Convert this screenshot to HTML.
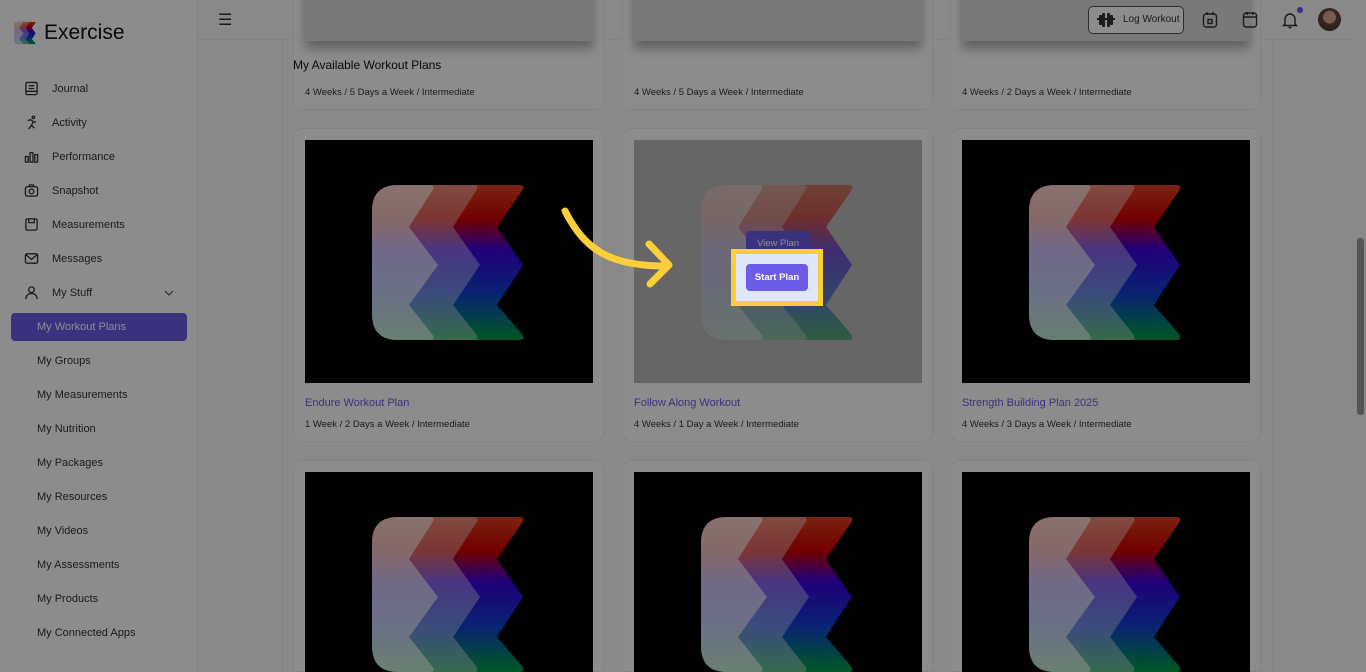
<!DOCTYPE html>
<html style="width:1366px;height:672px;overflow:hidden"><head><meta charset="utf-8"><style>
*{margin:0;padding:0;box-sizing:border-box}
body{width:1366px;height:672px;overflow:hidden;background:#fafafa;font-family:"Liberation Sans",sans-serif;position:relative;color:#222}
.side{position:absolute;left:0;top:0;width:198px;height:672px;background:#fff;border-right:1px solid #eee}
.logo{position:absolute;left:14px;top:21px;display:flex;align-items:center;gap:8px;font-size:21px;color:#111}
.nav{position:absolute;left:24px;font-size:11px;color:#333;display:flex;align-items:center;gap:13px}
.nav svg{width:15px;height:15px}
.sub{position:absolute;left:37px;font-size:11px;color:#333}
.active{position:absolute;left:11px;top:313px;width:176px;height:28px;background:#6c5ce7;border-radius:4px;color:#fff;font-size:11px;padding:8px 26px}
.card{position:absolute;width:311px;background:#fff;border:1px solid #eee;border-radius:10px}
.img{position:absolute;left:11px;width:288px;height:243px;background:#000;overflow:hidden}
.img svg{position:absolute;left:67px;top:45px}
.t{position:absolute;left:11px;font-size:11px;color:#6c5ce7}
.m{position:absolute;left:11px;font-size:9.5px;color:#333}
.ov{position:absolute;left:0;top:0;width:1366px;height:672px;background:rgba(0,0,0,0.45)}
</style></head><body>
<svg width="0" height="0" style="position:absolute"><defs>
<linearGradient id="g" x1="0" y1="0" x2="0" y2="1"><stop offset="0" stop-color="#e04020"/><stop offset=".22" stop-color="#d00000"/><stop offset=".42" stop-color="#3a00e0"/><stop offset=".7" stop-color="#1040d0"/><stop offset="1" stop-color="#00a040"/></linearGradient>
<symbol id="lg" viewBox="0 0 154 155">
<path d="M0 26Q0 0 26 0H147Q154 0 150 6L125 42L151 80L125 120L150 149Q154 155 147 155H26Q0 155 0 129Z" fill="url(#g)"/>
<path d="M0 26Q0 0 26 0H102Q108 0 104 6L81 42L108 80L81 120L104 149Q108 155 102 155H26Q0 155 0 129Z" fill="#fff" opacity=".38"/>
<path d="M0 26Q0 0 26 0H58Q64 0 60 6L37 42L66 80L37 120L60 149Q64 155 58 155H26Q0 155 0 129Z" fill="#fff" opacity=".6"/>
</symbol>
</defs></svg>
<div class="side">
<div class="logo"><svg width="22" height="24"><use href="#lg"/></svg>Exercise</div>
<div class="nav" style="top:81px"><svg viewBox="0 0 16 16" fill="none" stroke="#333" stroke-width="1.4"><rect x="2" y="1.5" width="12" height="13" rx="1.5"/><path d="M5 5h6M5 8h6M2 11h12"/></svg>Journal</div>
<div class="nav" style="top:115px"><svg viewBox="0 0 16 16" fill="none" stroke="#333" stroke-width="1.4"><circle cx="10" cy="2.5" r="1.3"/><path d="M4 6l3-1 3 2-2 4 3 3M8 11l-3 4M10 7l3 1"/></svg>Activity</div>
<div class="nav" style="top:149px"><svg viewBox="0 0 16 16" fill="none" stroke="#333" stroke-width="1.4"><rect x="1.5" y="8" width="3" height="6"/><rect x="6.5" y="4" width="3" height="10"/><rect x="11.5" y="6" width="3" height="8"/></svg>Performance</div>
<div class="nav" style="top:183px"><svg viewBox="0 0 16 16" fill="none" stroke="#333" stroke-width="1.4"><rect x="1.5" y="4" width="13" height="10" rx="2"/><circle cx="8" cy="9" r="2.5"/><path d="M5 4l1-2h4l1 2"/></svg>Snapshot</div>
<div class="nav" style="top:217px"><svg viewBox="0 0 16 16" fill="none" stroke="#333" stroke-width="1.4"><rect x="2" y="2" width="12" height="12" rx="1.5"/><path d="M5 2v4h6V2"/></svg>Measurements</div>
<div class="nav" style="top:251px"><svg viewBox="0 0 16 16" fill="none" stroke="#333" stroke-width="1.4"><rect x="1.5" y="3" width="13" height="10" rx="1.5"/><path d="M2 4l6 5 6-5"/></svg>Messages</div>
<div class="nav" style="top:285px"><svg viewBox="0 0 16 16" fill="none" stroke="#333" stroke-width="1.4"><circle cx="8" cy="5" r="3"/><path d="M2 15c0-4 3-6 6-6s6 2 6 6"/></svg>My Stuff</div>
<svg style="position:absolute;left:164px;top:289px" width="10" height="8" fill="none" stroke="#555" stroke-width="1.2"><path d="M1 2l4 4 4-4"/></svg>
<div class="active">My Workout Plans</div>
<div class="sub" style="top:355px">My Groups</div>
<div class="sub" style="top:389px">My Measurements</div>
<div class="sub" style="top:423px">My Nutrition</div>
<div class="sub" style="top:457px">My Packages</div>
<div class="sub" style="top:491px">My Resources</div>
<div class="sub" style="top:525px">My Videos</div>
<div class="sub" style="top:559px">My Assessments</div>
<div class="sub" style="top:593px">My Products</div>
<div class="sub" style="top:627px">My Connected Apps</div>
</div>
<div style="position:absolute;left:218px;top:10px;font-size:16px;color:#333">&#9776;</div>
<div style="position:absolute;left:282px;top:40px;height:632px;border-left:1px solid #eee"></div>
<div style="position:absolute;left:1272px;top:40px;height:632px;border-left:1px solid #eee"></div>
<div style="position:absolute;left:198px;top:39px;width:1158px;border-top:1px solid #eee"></div>

<div class="card" style="left:293px;top:-20px;height:130px"><div class="img" style="top:0;height:60px;background:#ddd;box-shadow:0 8px 10px rgba(0,0,0,.3)"></div><div class="m" style="top:106px">4 Weeks / 5 Days a Week / Intermediate</div></div>
<div class="card" style="left:622px;top:-20px;height:130px"><div class="img" style="top:0;height:60px;background:#ddd;box-shadow:0 8px 10px rgba(0,0,0,.3)"></div><div class="m" style="top:106px">4 Weeks / 5 Days a Week / Intermediate</div></div>
<div class="card" style="left:950px;top:-20px;height:130px"><div class="img" style="top:0;height:60px;background:#ddd;box-shadow:0 8px 10px rgba(0,0,0,.3)"></div><div class="m" style="top:106px">4 Weeks / 2 Days a Week / Intermediate</div></div>
<div style="position:absolute;left:293px;top:58px;font-size:12px;color:#111">My Available Workout Plans</div>

<div class="card" style="left:293px;top:128px;height:314px"><div class="img" style="top:11px"><svg width="154" height="155"><use href="#lg"/></svg></div><div class="t" style="top:268px">Endure Workout Plan</div><div class="m" style="top:290px">1 Week / 2 Days a Week / Intermediate</div></div>
<div class="card" style="left:622px;top:128px;height:314px"><div class="img" style="top:11px;background:#bbb"><svg width="154" height="155" opacity=".55"><use href="#lg"/></svg><div style="position:absolute;left:112px;top:91px;width:64px;height:26px;background:#6c5ce7;border-radius:4px;color:#fff;font-size:9.5px;text-align:center;line-height:26px">View Plan</div></div><div class="t" style="top:268px">Follow Along Workout</div><div class="m" style="top:290px">4 Weeks / 1 Day a Week / Intermediate</div></div>
<div class="card" style="left:950px;top:128px;height:314px"><div class="img" style="top:11px"><svg width="154" height="155"><use href="#lg"/></svg></div><div class="t" style="top:268px">Strength Building Plan 2025</div><div class="m" style="top:290px">4 Weeks / 3 Days a Week / Intermediate</div></div>

<div class="card" style="left:293px;top:460px;height:212px;border-radius:10px 10px 0 0"><div class="img" style="top:11px;height:201px"><svg width="154" height="155"><use href="#lg"/></svg></div></div>
<div class="card" style="left:622px;top:460px;height:212px;border-radius:10px 10px 0 0"><div class="img" style="top:11px;height:201px"><svg width="154" height="155"><use href="#lg"/></svg></div></div>
<div class="card" style="left:950px;top:460px;height:212px;border-radius:10px 10px 0 0"><div class="img" style="top:11px;height:201px"><svg width="154" height="155"><use href="#lg"/></svg></div></div>

<div style="position:absolute;left:1088px;top:6px;width:96px;height:28px;border:1px solid #555;border-radius:5px;font-size:10px;color:#333;padding-left:34px;line-height:26px;background:#fff">Log Workout</div>
<svg style="position:absolute;left:1097px;top:13px" width="18" height="14" fill="#333"><rect x="0" y="5" width="18" height="2"/><rect x="2" y="2" width="3" height="10" rx="1"/><rect x="5" y="0" width="3" height="14" rx="1"/><rect x="10" y="0" width="3" height="14" rx="1"/><rect x="13" y="2" width="3" height="10" rx="1"/></svg>
<svg style="position:absolute;left:1202px;top:11px" width="16" height="17" fill="none" stroke="#333" stroke-width="1.4"><rect x="1.5" y="3" width="13" height="13" rx="2.5"/><path d="M5 1v3M11 1v3"/><rect x="6" y="8.5" width="4" height="4"/></svg>
<svg style="position:absolute;left:1242px;top:11px" width="16" height="17" fill="none" stroke="#333" stroke-width="1.4"><rect x="1.5" y="2" width="13" height="14" rx="2.5"/><path d="M1.5 6h13M5 1v3M11 1v3"/></svg>
<svg style="position:absolute;left:1282px;top:11px" width="16" height="18" fill="none" stroke="#333" stroke-width="1.4"><path d="M3 13V8a5 5 0 0110 0v5l1.5 1.5h-13z"/><path d="M6.5 16.5h3"/></svg>
<div style="position:absolute;left:1297px;top:7px;width:6px;height:6px;border-radius:50%;background:#6c5ce7"></div>
<div style="position:absolute;left:1318px;top:8px;width:23px;height:23px;border-radius:50%;background:radial-gradient(circle at 50% 40%,#d9a78f 0 35%,#6b4a3e 36%,#3a2a2a)"></div>
<div style="position:absolute;left:1357px;top:238px;width:7px;height:177px;background:#999;border-radius:3px"></div>

<div class="ov"></div>
<svg style="position:absolute;left:0;top:0" width="1366" height="672" fill="none" stroke="#fbcf3a" stroke-width="7" stroke-linecap="round" stroke-linejoin="round"><path d="M565 211C585 250 610 266 665 266"/><path d="M649 244L669 265L650 284"/></svg>
<div style="position:absolute;left:731px;top:249px;width:92px;height:57px;border:5px solid #fbcf3a;background:#dfe8f8"></div>
<div style="position:absolute;left:746px;top:264px;width:62px;height:27px;background:#6c5ce7;border-radius:4px;color:#fff;font-size:9.5px;text-align:center;line-height:27px;font-weight:bold">Start Plan</div>
</body></html>
